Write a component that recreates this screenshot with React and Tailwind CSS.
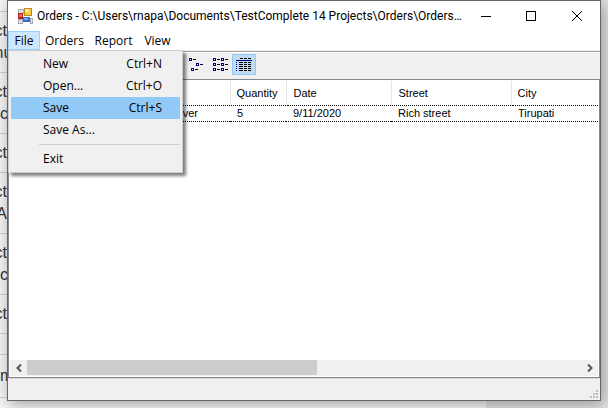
import React from "react";

const backgroundRows = [
  { lines: [["Select", "end"], ["nu", "center"]] },
  { lines: [["Select", "end"], ["co", "start"]] },
  { lines: [["Select", "end"]] },
  { lines: [["Select", "end"], ["A", "end"]] },
  { lines: [["Select", "end"], ["co", "start"]] },
  { lines: [["Select", "end"]] },
];

const alignment = {
  start: "flex justify-start",
  center: "flex justify-center",
  end: "flex justify-end",
};

const menuItems = [
  { label: "New", shortcut: "Ctrl+N" },
  { label: "Open...", shortcut: "Ctrl+O" },
  { label: "Save", shortcut: "Ctrl+S", active: true },
  { label: "Save As..." },
];

function BackgroundPage() {
  return (
    <div className="w-[7px] shrink-0 overflow-hidden pt-[11px] font-['Liberation_Sans',sans-serif] text-base leading-[22px] text-[#333]">
      {backgroundRows.map((row, i) => (
        <div key={i} className="border-t border-[#d0d0d0] py-2">
          {row.lines.map(([text, side], j) => (
            <div key={j} className={alignment[side]}>
              <span>{text}</span>
            </div>
          ))}
        </div>
      ))}
      <div className="h-[21px] border-t border-[#d0d0d0]" />
      <div className="border-y border-[#d0d0d0] py-[10px]">m</div>
    </div>
  );
}

function AppIcon() {
  return (
    <svg className="h-4 w-4" viewBox="0 0 16 16" shapeRendering="crispEdges" aria-hidden="true">
      <path d="M1 1h5v4H1zM1 11h4v4H1zM13 10h2v5h-2z" fill="#dfe3e8" stroke="#a5abb3" strokeWidth="1" />
      <rect x="1" y="5" width="5" height="6" fill="#b51f1f" />
      <rect x="2" y="6" width="3" height="3" fill="#e86a5a" />
      <rect x="7" y="0" width="8" height="8" fill="#b98a20" />
      <rect x="8" y="1" width="6" height="6" fill="#f7c93c" />
      <rect x="8" y="1" width="4" height="3" fill="#ffe88f" />
      <rect x="6" y="9" width="7" height="5" fill="#3a6fd0" />
      <rect x="7" y="10" width="4" height="2" fill="#78a7f0" />
    </svg>
  );
}

function Node({ x, y }) {
  return (
    <g>
      <rect x={x} y={y} width="3" height="3" fill="#000080" />
      <rect x={x + 1} y={y + 1} width="1" height="1" fill="#fff" />
      <rect x={x + 4} y={y + 1} width="3" height="1" fill="#000" />
    </g>
  );
}

function SmallIconsGlyph() {
  return (
    <svg className="h-4 w-4" viewBox="0 0 16 16" shapeRendering="crispEdges" aria-hidden="true">
      <Node x={0} y={1} />
      <Node x={7} y={6} />
      <Node x={2} y={11} />
    </svg>
  );
}

function ListGlyph() {
  return (
    <svg className="h-4 w-4" viewBox="0 0 16 16" shapeRendering="crispEdges" aria-hidden="true">
      {[1, 6, 11].map((y) => (
        <g key={y}>
          <Node x={0} y={y} />
          <Node x={8} y={y} />
        </g>
      ))}
    </svg>
  );
}

function DetailsGlyph() {
  return (
    <svg className="h-4 w-4" viewBox="0 0 16 16" shapeRendering="crispEdges" aria-hidden="true">
      <path d="M4 1h3v1H4zM8 1h3v1H8zM12 1h3v1h-3z" fill="#000" />
      <path d="M0 3h16v1H0z" fill="#000080" />
      {[5, 7, 9, 11, 13].map((y) => (
        <g key={y}>
          <rect x="0" y={y} width="1" height="1" fill="#000080" />
          <path d={`M3 ${y}h4v1H3zM8 ${y}h3v1H8zM12 ${y}h3v1h-3z`} fill="#000" />
        </g>
      ))}
    </svg>
  );
}

function TitleBar() {
  return (
    <header className="flex h-[30px] shrink-0 items-center pl-[9px] text-black">
      <AppIcon />
      <h1 className="ml-1 min-w-0 flex-1 truncate font-['Roboto','Open_Sans',sans-serif] text-xs">
        Orders - C:\Users\rnapa\Documents\TestComplete 14 Projects\Orders\Orders...
      </h1>
      <button aria-label="Minimize" className="flex h-full w-[45px] items-center justify-center">
        <svg width="10" height="10" shapeRendering="crispEdges"><path d="M0 5.5h10" stroke="#000" /></svg>
      </button>
      <button aria-label="Maximize" className="flex h-full w-[46px] items-center justify-center">
        <svg width="10" height="10" shapeRendering="crispEdges"><path d="M.5 .5h9v9h-9z" fill="none" stroke="#000" /></svg>
      </button>
      <button aria-label="Close" className="flex h-full w-[46px] items-center justify-center">
        <svg width="10" height="10"><path d="M0 0l10 10M10 0L0 10" stroke="#000" /></svg>
      </button>
    </header>
  );
}

function FileMenu() {
  return (
    <div className="absolute top-[19px] left-0 z-10 w-[175px] border border-[#ccc] bg-[#f0f0f0] p-0.5 shadow-[3px_3px_3px_rgba(0,0,0,0.5)]">
      {menuItems.map((item) => (
        <button
          key={item.label}
          className={
            item.active
              ? "flex h-[22px] w-full items-center justify-between bg-[#91c9f7] pr-[18px] pl-8"
              : "flex h-[22px] w-full items-center justify-between pr-[18px] pl-8"
          }
        >
          <span>{item.label}</span>
          <span>{item.shortcut}</span>
        </button>
      ))}
      <hr className="my-[3px] ml-7 border-[#d0d0d0]" />
      <button className="flex h-[22px] w-full items-center pl-8">Exit</button>
    </div>
  );
}

function MenuBar() {
  return (
    <nav className="relative flex h-[19px] shrink-0 text-xs text-black">
      <button className="w-8 border border-[#99d1ff] bg-[#cce8ff]">File</button>
      <button className="w-[49px]">Orders</button>
      <button className="w-[49px]">Report</button>
      <button className="w-[39px]">View</button>
      <FileMenu />
    </nav>
  );
}

function ToolBar() {
  return (
    <div className="flex h-[29px] shrink-0 flex-col bg-[#f0f0f0]">
      <div className="h-[3px] shrink-0 border-b border-white">
        <div className="mt-px border-b border-[#a0a0a0]" />
      </div>
      <div className="flex flex-1 items-start pl-[177px]">
        <button aria-label="Small icons" className="flex h-[23px] w-6 items-center justify-center"><SmallIconsGlyph /></button>
        <button aria-label="List" className="flex h-[23px] w-[23px] items-center justify-center"><ListGlyph /></button>
        <button aria-label="Details" className="mt-px flex h-[21px] w-6 items-center justify-center border border-[#90c8f6] bg-[#c0dcf3]"><DetailsGlyph /></button>
      </div>
    </div>
  );
}

function OrdersList() {
  return (
    <main className="flex min-h-0 flex-1 flex-col border border-[#828790] bg-white font-['Liberation_Sans',Arial,sans-serif] text-[11px] text-black">
      <div className="flex-1 overflow-hidden p-px">
        <table className="w-full table-fixed border-collapse text-left">
          <colgroup>
            <col className="w-[220px]" />
            <col className="w-14" />
            <col className="w-[105px]" />
            <col className="w-[120px]" />
            <col />
          </colgroup>
          <thead>
            <tr className="h-6">
              <th className="border-r border-[#e5e5e5]" aria-label="Product" />
              <th className="border-r border-[#e5e5e5] pl-[6px] font-normal">Quantity</th>
              <th className="border-r border-[#e5e5e5] pl-[7px] font-normal">Date</th>
              <th className="border-r border-[#e5e5e5] pl-[7px] font-normal">Street</th>
              <th className="pl-[6px] font-normal">City</th>
            </tr>
          </thead>
          <tbody>
            <tr className="h-4 border-y border-dotted border-black leading-[14px]">
              <td className="pr-8 text-right">ver</td>
              <td className="pl-[7px]">5</td>
              <td className="pl-[7px]">9/11/2020</td>
              <td className="pl-[7px]">Rich street</td>
              <td className="pl-[7px]">Tirupati</td>
            </tr>
          </tbody>
        </table>
      </div>
      <div className="mx-px mb-px flex h-4 bg-[#f0f0f0]">
        <button aria-label="Scroll left" className="flex w-[17px] items-center justify-center">
          <svg width="6" height="8"><path d="M5 .5L1.500 4L5 7.500" fill="none" stroke="#555" strokeWidth="2" /></svg>
        </button>
        <div className="flex-1">
          <div className="h-[15px] w-[290px] bg-[#cdcdcd]" />
        </div>
        <button aria-label="Scroll right" className="flex w-[17px] items-center justify-center">
          <svg width="6" height="8"><path d="M1 .5L4.500 4L1 7.500" fill="none" stroke="#555" strokeWidth="2" /></svg>
        </button>
      </div>
    </main>
  );
}

function StatusBar() {
  return (
    <footer className="flex h-[22px] shrink-0 items-end justify-end border-t border-[#d7d7d7] bg-[#f0f0f0] pr-[2px] pb-[2px]">
      <svg width="8" height="8" fill="#bfbfbf" shapeRendering="crispEdges" aria-hidden="true">
        <path d="M6 0h2v2H6zM3 3h2v2H3zM6 3h2v2H6zM0 6h2v2H0zM3 6h2v2H3zM6 6h2v2H6z" />
      </svg>
    </footer>
  );
}

export default function App() {
  return (
    <div className="flex h-screen w-full overflow-hidden bg-[linear-gradient(to_right,#f5f5f5_80%,#e2e2e2_80%)]">
      <BackgroundPage />
      <div className="z-10 mr-[7px] mb-[7px] flex min-w-0 flex-1 flex-col border border-[#666] bg-white font-['Open_Sans','Noto_Sans',sans-serif] shadow-[2px_3px_14px_rgba(0,0,0,0.35)]">
        <TitleBar />
        <MenuBar />
        <ToolBar />
        <OrdersList />
        <StatusBar />
      </div>
    </div>
  );
}
